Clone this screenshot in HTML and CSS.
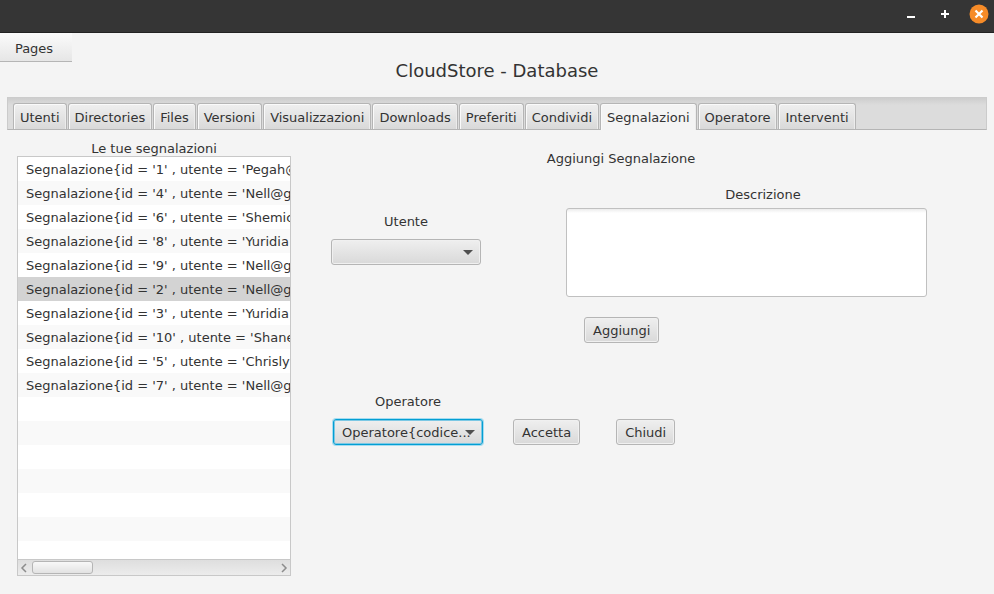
FILE: index.html
```html
<!DOCTYPE html>
<html lang="it">
<head>
<meta charset="utf-8">
<title>CloudStore - Database</title>
<link rel="stylesheet" href="styles.css">
</head>
<body>
<header class="titlebar">
  <button class="win" type="button" aria-label="Riduci"><svg width="20" height="20" viewBox="0 0 20 20"><path d="M6 12h8v2H6z" fill="#fff"/></svg></button>
  <button class="win" type="button" aria-label="Ingrandisci"><svg width="20" height="20" viewBox="0 0 20 20"><path d="M9 6h2v3h3v2h-3v3H9v-3H6V9h3z" fill="#fff"/></svg></button>
  <button class="win" type="button" aria-label="Chiudi finestra"><svg width="20" height="20" viewBox="0 0 20 20"><circle cx="10" cy="10" r="9.5" fill="#f68b28"/><path d="M6.500 6.500l7 7M13.500 6.500l-7 7" stroke="#fff" stroke-width="2.2"/></svg></button>
</header>
<button class="pages" type="button">Pages</button>
<h1 class="title">CloudStore - Database</h1>
<nav class="tabs">
  <button class="tab" type="button">Utenti</button>
  <button class="tab" type="button">Directories</button>
  <button class="tab" type="button">Files</button>
  <button class="tab" type="button">Versioni</button>
  <button class="tab" type="button">Visualizzazioni</button>
  <button class="tab" type="button">Downloads</button>
  <button class="tab" type="button">Preferiti</button>
  <button class="tab" type="button">Condividi</button>
  <button class="tab active" type="button">Segnalazioni</button>
  <button class="tab" type="button">Operatore</button>
  <button class="tab" type="button">Interventi</button>
</nav>
<main class="content">
  <section class="reports">
    <h2 class="label">Le tue segnalazioni</h2>
    <div class="list">
      <ul class="rows">
        <li>Segnalazione{id = '1' , utente = 'Pegah@</li>
        <li>Segnalazione{id = '4' , utente = 'Nell@g</li>
        <li>Segnalazione{id = '6' , utente = 'Shemic</li>
        <li>Segnalazione{id = '8' , utente = 'Yuridia</li>
        <li>Segnalazione{id = '9' , utente = 'Nell@g</li>
        <li class="selected">Segnalazione{id = '2' , utente = 'Nell@g</li>
        <li>Segnalazione{id = '3' , utente = 'Yuridia</li>
        <li>Segnalazione{id = '10' , utente = 'Shane</li>
        <li>Segnalazione{id = '5' , utente = 'Chrisly</li>
        <li>Segnalazione{id = '7' , utente = 'Nell@g</li>
      </ul>
      <div class="scrollbar">
        <svg width="14" height="15" viewBox="0 0 14 15"><path d="M8 4L4 8l4 4" fill="none" stroke="#8c8c8c" stroke-width="1.5"/></svg>
        <span class="thumb"></span>
        <svg width="14" height="15" viewBox="0 0 14 15"><path d="M6 4l4 4-4 4" fill="none" stroke="#8c8c8c" stroke-width="1.5"/></svg>
      </div>
    </div>
  </section>
  <section class="forms">
    <h2 class="label heading">Aggiungi Segnalazione</h2>
    <form class="add">
      <div class="field user">
        <label class="label" for="utente">Utente</label>
        <div class="combo"><select id="utente"><option></option></select><svg class="arrow" width="10" height="5" viewBox="0 0 10 5"><path d="M0 0h10L5 5z" fill="#505050"/></svg></div>
      </div>
      <div class="field description">
        <label class="label" for="descrizione">Descrizione</label>
        <textarea id="descrizione"></textarea>
        <button class="button submit" type="button">Aggiungi</button>
      </div>
    </form>
    <form class="assign">
      <div class="field">
        <label class="label" for="operatore">Operatore</label>
        <div class="combo focused"><select id="operatore"><option>Operatore{codice...</option></select><svg class="arrow" width="10" height="5" viewBox="0 0 10 5"><path d="M0 0h10L5 5z" fill="#505050"/></svg></div>
      </div>
      <button class="button" type="button">Accetta</button>
      <button class="button close" type="button">Chiudi</button>
    </form>
  </section>
</main>
</body>
</html>
```
FILE: styles.css
```css
* { box-sizing: border-box; }

body {
  margin: 0;
  min-height: 100vh;
  display: flex;
  flex-direction: column;
  background: #f4f4f4;
  color: #333;
  font: 13px/16px "DejaVu Sans", sans-serif;
}

button, select, textarea { font: inherit; color: inherit; margin: 0; }

.titlebar {
  height: 33px;
  display: flex;
  justify-content: flex-end;
  gap: 14px;
  padding: 4px 5px 0 0;
  background: #353535;
  border-bottom: 1px solid #222;
}
.win { width: 20px; height: 20px; padding: 0; border: 0; background: none; }
.win svg { display: block; }

.pages {
  align-self: flex-start;
  width: 72px;
  height: 29px;
  padding: 3px 4px 0 0;
  border: 0;
  border-bottom: 1px solid #b5b5b5;
  background: linear-gradient(#fbfbfb, #e6e6e6);
}

.title {
  margin: 0;
  font-size: 18px;
  line-height: 18px;
  font-weight: 400;
  text-align: center;
}

.tabs {
  display: flex;
  gap: 1px;
  height: 33px;
  margin: 17px 7px 0;
  padding: 6px 5px 0;
  border: 1px solid #cbcbcb;
  border-top: 0;
  border-bottom-color: #b5b5b5;
  background: linear-gradient(#cbcbcb, #dcdcdc 8px);
}
.tab {
  height: 26px;
  padding: 2px 6px 0;
  border: 1px solid #b5b5b5;
  border-bottom: 0;
  border-radius: 3px 3px 0 0;
  background: linear-gradient(#efefef, #d9d9d9);
  box-shadow: inset 1px 1px #fafafa, inset -1px 0 #ececec;
}
.tab.active { height: 27px; padding-bottom: 1px; background: #f4f4f4; }

.content { flex: 1; display: flex; gap: 40px; padding: 10px 67px 18px 17px; }
.label {
  height: 16px;
  margin: 0;
  font-size: 13px;
  line-height: 18px;
  font-weight: 400;
  text-align: center;
}

.reports { width: 274px; display: flex; flex-direction: column; }
.list {
  flex: 1;
  display: flex;
  flex-direction: column;
  border: 1px solid #c8c8c8;
  overflow: hidden;
}
.rows {
  flex: 1;
  margin: 0;
  padding: 0;
  list-style: none;
  background: repeating-linear-gradient(#fff 0 24px, #f9f9f9 24px 48px);
}
.rows li { height: 24px; padding: 0 8px; line-height: 26px; white-space: nowrap; }
.rows .selected { background: #d3d3d3; }
.scrollbar {
  height: 16px;
  display: flex;
  align-items: center;
  border-top: 1px solid #c8c8c8;
  background: linear-gradient(#dedede, #ececec);
}
.thumb {
  width: 61px;
  height: 13px;
  margin-right: auto;
  border: 1px solid #b5b5b5;
  border-radius: 3px;
  background: linear-gradient(#f8f8f8, #e2e2e2);
}

.forms { flex: 1; padding-top: 10px; }
.heading { width: 580px; max-width: 100%; }
.add { display: flex; gap: 85px; margin-top: 20px; }
.field { display: flex; flex-direction: column; gap: 10px; }
.user { padding-top: 27px; }
.description { flex: 1; gap: 6px; }
.description .label { padding-left: 33px; }
textarea {
  height: 89px;
  border: 1px solid #c0c0c0;
  border-radius: 3px;
  resize: none;
  outline: 0;
  background: linear-gradient(#ececec, #fff 4px);
}
.combo { position: relative; width: 150px; height: 26px; }
.combo select, .button {
  height: 26px;
  border: 1px solid #b5b5b5;
  border-radius: 3px;
  background: linear-gradient(#efefef, #d9d9d9);
  box-shadow: inset 0 0 0 1px #f0f0f0;
}
.combo select { width: 100%; padding: 2px 0 0 8px; appearance: none; outline: 0; }
.focused select { border-color: #039ed3; box-shadow: 0 0 0 1px #a5dcf0, inset 0 0 0 1px #7cc8e4; }
.arrow { position: absolute; right: 8px; top: 11px; }
.button { padding: 2px 8px 0; }
.submit { align-self: flex-start; margin: 14px 0 0 18px; }
.assign { display: flex; align-items: flex-end; margin: 50px 0 0 2px; }
.assign .button { margin-left: 30px; }
.assign .close { margin-left: 36px; }
```
